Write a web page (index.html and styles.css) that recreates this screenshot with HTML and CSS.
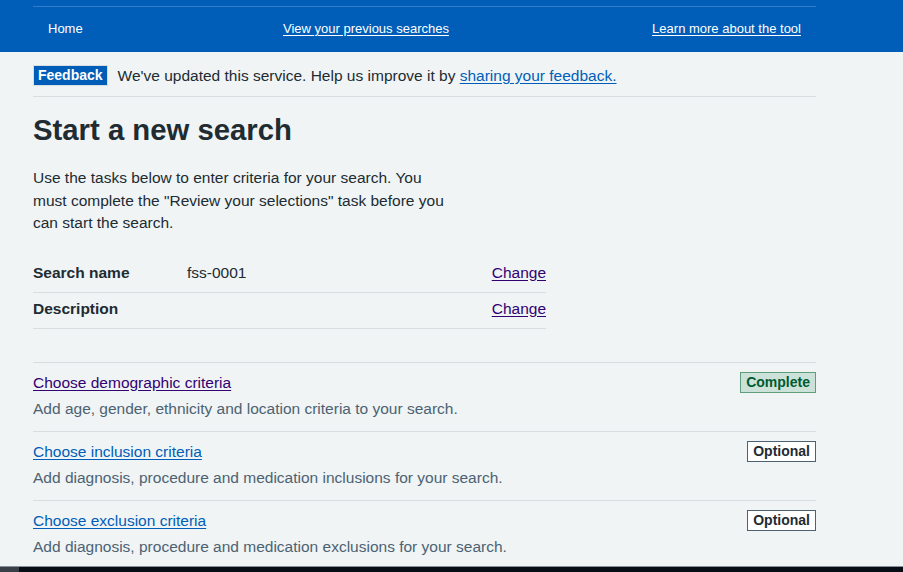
FILE: index.html
```html
<!DOCTYPE html>
<html lang="en">
<head>
    <meta charset="UTF-8">
    <meta name="viewport" content="width=device-width, initial-scale=1.0">
    <title>Start a new search</title>
    <link rel="stylesheet" href="styles.css">
</head>
<body>
    <header class="header">
        <nav class="header-nav">
            <span class="nav-home">Home</span>
            <a href="#" class="nav-link">View your previous searches</a>
            <a href="#" class="nav-link nav-link-end">Learn more about the tool</a>
        </nav>
    </header>

    <main class="page">
        <div class="feedback-banner">
            <strong class="tag tag-blue">Feedback</strong>
            <p>We've updated this service. Help us improve it by <a href="#" class="link">sharing your feedback.</a></p>
        </div>

        <h1 class="page-title">Start a new search</h1>
        <p class="intro">Use the tasks below to enter criteria for your search. You must complete the "Review your selections" task before you can start the search.</p>

        <dl class="summary-list">
            <div class="summary-row">
                <dt>Search name</dt>
                <dd>fss-0001</dd>
                <dd class="summary-action"><a href="#" class="link visited">Change</a></dd>
            </div>
            <div class="summary-row">
                <dt>Description</dt>
                <dd></dd>
                <dd class="summary-action"><a href="#" class="link visited">Change</a></dd>
            </div>
        </dl>

        <ul class="task-list">
            <li class="task">
                <div class="task-text">
                    <a href="#" class="link visited">Choose demographic criteria</a>
                    <p class="task-hint">Add age, gender, ethnicity and location criteria to your search.</p>
                </div>
                <strong class="tag tag-green">Complete</strong>
            </li>
            <li class="task">
                <div class="task-text">
                    <a href="#" class="link">Choose inclusion criteria</a>
                    <p class="task-hint">Add diagnosis, procedure and medication inclusions for your search.</p>
                </div>
                <strong class="tag tag-white">Optional</strong>
            </li>
            <li class="task">
                <div class="task-text">
                    <a href="#" class="link">Choose exclusion criteria</a>
                    <p class="task-hint">Add diagnosis, procedure and medication exclusions for your search.</p>
                </div>
                <strong class="tag tag-white">Optional</strong>
            </li>
        </ul>
    </main>

    <div class="taskbar"><span class="taskbar-start"></span></div>
</body>
</html>
```

FILE: styles.css
```css
* {
    margin: 0;
    padding: 0;
    box-sizing: border-box;
}

body {
    font-family: "Liberation Sans", Arial, sans-serif;
    font-size: 15.5px;
    line-height: 23px;
    background-color: #f0f4f5;
    color: #212b32;
    overflow: hidden;
}

.header {
    background-color: #005eb8;
    padding-top: 6px;
}

.header-nav {
    width: 783px;
    margin-left: 33px;
    height: 46px;
    border-top: 1px solid rgba(255, 255, 255, 0.2);
    display: flex;
    align-items: center;
    padding: 0 15px 2px;
    font-size: 13px;
    color: white;
}

.nav-home {
    width: 235px;
}

.nav-link {
    color: white;
    text-decoration: underline;
    text-underline-offset: 2px;
}

.nav-link-end {
    margin-left: auto;
}

.page {
    width: 783px;
    margin-left: 33px;
}

.feedback-banner {
    display: flex;
    align-items: center;
    gap: 10px;
    padding: 12px 0 9px;
    border-bottom: 1px solid #d8dde0;
}

.link {
    color: #005eb8;
    text-decoration: underline;
    text-underline-offset: 2px;
}

.link.visited {
    color: #330072;
}

.tag {
    display: inline-block;
    font-size: 14px;
    line-height: 19px;
    font-weight: bold;
    padding: 0 5px;
    border: 1px solid;
}

.tag-blue {
    background-color: #005eb8;
    border-color: #d8dde0;
    color: white;
    padding: 0 4px;
}

.tag-green {
    background-color: #cce2d8;
    border-color: #5f9e7d;
    color: #005a30;
}

.tag-white {
    background-color: white;
    border-color: #4c6272;
    color: #212b32;
}

.page-title {
    font-size: 29.3px;
    line-height: 36px;
    font-weight: bold;
    margin-top: 15px;
}

.intro {
    max-width: 420px;
    line-height: 22.5px;
    margin-top: 19px;
}

.summary-list {
    width: 513px;
    margin-top: 22px;
}

.summary-row {
    display: flex;
    padding: 4px 0 8px;
    border-bottom: 1px solid #d8dde0;
}

.summary-row dt {
    width: 154px;
    font-weight: bold;
}

.summary-row dd {
    flex: 1;
}

.summary-action {
    flex: 0 0 auto !important;
}

.task-list {
    list-style: none;
    margin-top: 33px;
}

.task {
    display: flex;
    justify-content: space-between;
    align-items: flex-start;
    padding: 8px 0 11px;
    border-top: 1px solid #d8dde0;
}

.task-hint {
    color: #4c6272;
    margin-top: 3px;
}

.task .tag {
    margin-top: 1px;
}

.taskbar {
    position: fixed;
    left: 0;
    right: 0;
    bottom: 0;
    height: 6px;
    background-color: #070c15;
    border-top: 1px solid #8a9099;
}

.taskbar-start {
    display: block;
    width: 19px;
    height: 100%;
    background-color: #3a3f47;
}
```
